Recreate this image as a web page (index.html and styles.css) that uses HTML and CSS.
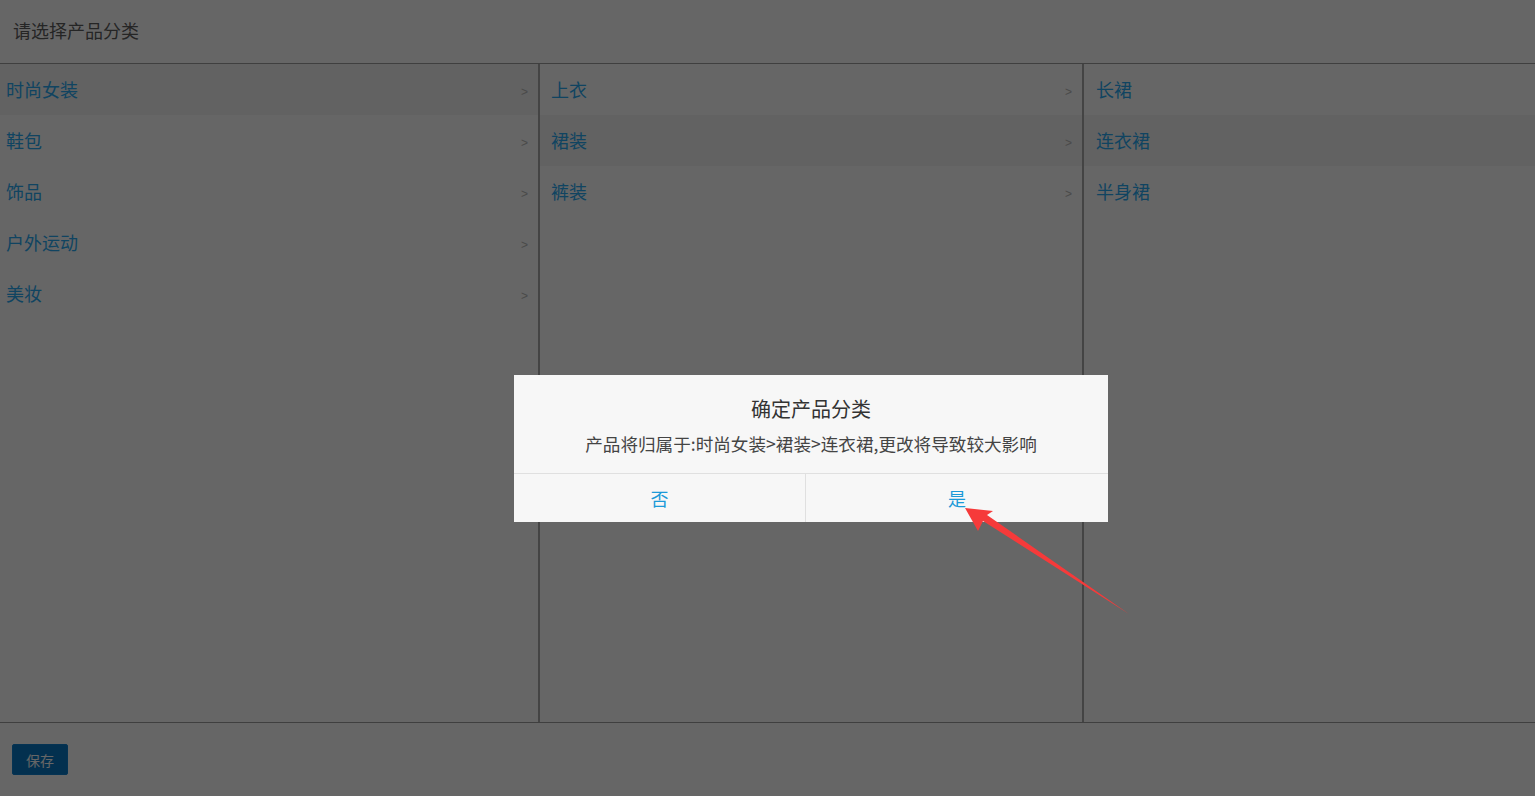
FILE: index.html
```html
<!DOCTYPE html>
<html lang="zh-CN">
<head>
<meta charset="utf-8">
<title>请选择产品分类</title>
<link rel="stylesheet" href="styles.css">
</head>
<body>
<div class="page">
  <header class="page-header">请选择产品分类</header>
  <main class="columns">
    <ul class="col col-1">
      <li class="row active"><span class="label">时尚女装</span><span class="chev">&gt;</span></li>
      <li class="row"><span class="label">鞋包</span><span class="chev">&gt;</span></li>
      <li class="row"><span class="label">饰品</span><span class="chev">&gt;</span></li>
      <li class="row"><span class="label">户外运动</span><span class="chev">&gt;</span></li>
      <li class="row"><span class="label">美妆</span><span class="chev">&gt;</span></li>
    </ul>
    <ul class="col col-2">
      <li class="row"><span class="label">上衣</span><span class="chev">&gt;</span></li>
      <li class="row active"><span class="label">裙装</span><span class="chev">&gt;</span></li>
      <li class="row"><span class="label">裤装</span><span class="chev">&gt;</span></li>
    </ul>
    <ul class="col col-3">
      <li class="row"><span class="label">长裙</span></li>
      <li class="row active"><span class="label">连衣裙</span></li>
      <li class="row"><span class="label">半身裙</span></li>
    </ul>
  </main>
  <footer class="page-footer">
    <button class="btn-save">保存</button>
  </footer>
</div>
<div class="mask"></div>
<div class="dialog">
  <div class="dialog-body">
    <div class="dialog-title">确定产品分类</div>
    <div class="dialog-msg">产品将归属于:时尚女装&gt;裙装&gt;连衣裙,更改将导致较大影响</div>
  </div>
  <div class="dialog-actions">
    <div class="dialog-btn">否</div>
    <div class="dialog-btn">是</div>
  </div>
</div>
<svg class="annot-arrow" width="1535" height="796" viewBox="0 0 1535 796">
  <polygon points="965,508 993,511 987,515 1129,614 983,521 978,531" fill="#f63a3a"/>
</svg>
</body>
</html>
```
FILE: styles.css
```css
* { box-sizing: border-box; }
html, body { margin: 0; padding: 0; }
body {
  width: 1535px;
  height: 796px;
  overflow: hidden;
  background: #ffffff;
  font-family: "Noto Sans CJK SC", "Noto Sans", sans-serif;
  position: relative;
}
.page {
  display: flex;
  flex-direction: column;
  height: 796px;
}
.page-header {
  height: 64px;
  flex: none;
  padding-left: 13px;
  padding-bottom: 4px;
  display: flex;
  align-items: center;
  font-size: 18px;
  color: #5e5e5e;
  border-bottom: 1px solid #9e9e9e;
}
.columns {
  flex: none;
  height: 659px;
  display: grid;
  grid-template-columns: 540px 544px 1fr;
  border-bottom: 1px solid #9e9e9e;
}
.col {
  list-style: none;
  margin: 0;
  padding: 0;
}
.col-1, .col-2 { border-right: 2px solid #ababab; }
.row {
  height: 51px;
  display: flex;
  align-items: center;
  justify-content: space-between;
  padding: 0 10px 0 11px;
}
.col-1 .row { padding-left: 6px; }
.col-3 .row { padding-left: 12px; }
.row.active { background: #f4f4f4; }
.label {
  font-size: 18px;
  color: #2aaaf2;
  padding-bottom: 2px;
}
.chev {
  font-size: 12px;
  color: #b8b8b8;
  font-family: "Liberation Sans", sans-serif;
  padding-top: 4px;
}
.page-footer {
  flex: 1;
  padding: 21px 12px 0;
}
.btn-save {
  width: 56px;
  height: 31px;
  border: 1px solid #0e80cf;
  border-radius: 2px;
  background: #0879c6;
  color: #ffffff;
  font-family: "Noto Sans CJK SC", sans-serif;
  font-size: 14px;
  padding: 0;
}
.mask {
  position: absolute;
  inset: 0;
  background: rgba(0, 0, 0, 0.6);
}
.dialog {
  position: absolute;
  left: 514px;
  top: 375px;
  width: 594px;
  background: #f7f7f7;
}
.dialog-body {
  height: 99px;
  border-bottom: 1px solid #e0e0e0;
  display: flex;
  flex-direction: column;
  align-items: center;
  padding-top: 20px;
}
.dialog-title {
  font-size: 20px;
  line-height: 28px;
  color: #333333;
}
.dialog-msg {
  font-size: 17.6px;
  line-height: 26px;
  margin-top: 8px;
  color: #444444;
}
.dialog-actions {
  display: grid;
  grid-template-columns: 291px 1fr;
  height: 48px;
}
.dialog-btn {
  display: flex;
  align-items: center;
  justify-content: center;
  font-size: 18px;
  color: #1c9ad8;
}
.dialog-btn + .dialog-btn { border-left: 1px solid #e0e0e0; }
.annot-arrow {
  position: absolute;
  left: 0;
  top: 0;
  pointer-events: none;
}
```
